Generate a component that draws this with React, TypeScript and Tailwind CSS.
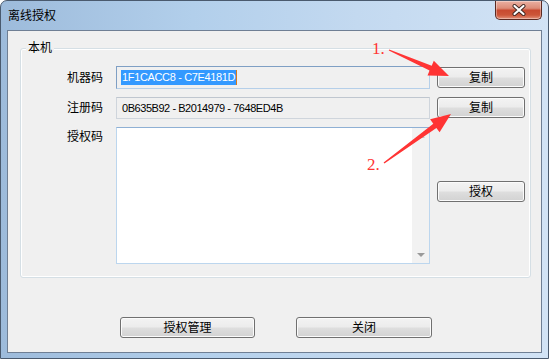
import React from 'react';

const btn =
  "flex items-center justify-center h-[21px] rounded-[3px] border border-[#707070] bg-[linear-gradient(#f3f3f3,#ececec_48%,#dedede_52%,#d2d2d2)] shadow-[inset_0_0_0_1px_#fbfbfb] text-[12px] leading-none text-black";

const WinButton: React.FC<{ label: string; className?: string }> = ({ label, className }) => (
  <button className={`${btn} ${className ?? ''}`}>{label}</button>
);

const Arrow: React.FC<{ tail: [number, number]; tip: [number, number] }> = ({ tail, tip }) => {
  const dx = tip[0] - tail[0];
  const dy = tip[1] - tail[1];
  const len = Math.hypot(dx, dy);
  const ux = dx / len;
  const uy = dy / len;
  const px = -uy;
  const py = ux;
  const bx = tip[0] - ux * 20;
  const by = tip[1] - uy * 20;
  const pts = [
    [tail[0] + px * 0.6, tail[1] + py * 0.6],
    [bx + px * 2.6, by + py * 2.6],
    [bx + px * 8, by + py * 8],
    tip,
    [bx - px * 8, by - py * 8],
    [bx - px * 2.6, by - py * 2.6],
    [tail[0] - px * 0.6, tail[1] - py * 0.6],
  ]
    .map((p) => `${p[0].toFixed(1)},${p[1].toFixed(1)}`)
    .join(' ');
  return <polygon points={pts} fill="#ff3434" />;
};

export default function App() {
  return (
    <div className="relative w-[549px] h-[359px] overflow-hidden rounded-t-[7px] border border-[#4a5a6e] bg-[linear-gradient(90deg,#9dbbdb,#b2cfeb_35%,#c3d9f0_65%,#d2e3f5)] font-['Liberation_Sans','Noto_Sans_CJK_SC',sans-serif] text-black">
      {/* title bar */}
      <div className="flex h-[29px] items-start justify-between">
        <div className="pl-[7px] pt-[7px] text-[12px] leading-[16px] text-black">离线授权</div>
        <button className="mr-[6px] flex h-[19px] w-[47px] items-center justify-center rounded-b-[5px] border border-t-0 border-[#5b2a22] bg-[linear-gradient(#eab0a2,#dc8c78_40%,#c84a30_52%,#cc5639_78%,#e3917a)] shadow-[inset_0_0_0_1px_rgba(255,255,255,0.35)]">
          <svg width="16" height="12" viewBox="0 0 16 12">
            <path d="M3.5 2 L12.5 10 M12.5 2 L3.5 10" stroke="#3d2520" strokeWidth="4" strokeLinecap="round" />
            <path d="M3.5 2 L12.5 10 M12.5 2 L3.5 10" stroke="#ffffff" strokeWidth="2.2" strokeLinecap="round" />
          </svg>
        </button>
      </div>

      {/* client area */}
      <div className="mx-[6px] h-[323px] border border-[#6f7f94] bg-[#f0f0f0]">
        {/* group box */}
        <div className="relative ml-[12px] mt-[17px] h-[230px] w-[511px] rounded-[3px] border border-[#d5dfe5] shadow-[inset_0_0_0_1px_#ffffff]">
          <span className="absolute -top-[9px] left-[5px] bg-[#f0f0f0] px-[2px] text-[12px] leading-[16px]">本机</span>

          <div className="grid grid-cols-[88px_314px_88px] gap-x-[7px] gap-y-[8px] pt-[17px]">
            {/* row 1 */}
            <div className="flex h-[23px] items-center pl-[46px] text-[12px]">机器码</div>
            <div className="flex h-[23px] items-center border border-[#7f9fc4] border-r-[#b5cfe9] border-b-[#b5cfe9] bg-[#f0f0f0] pl-[4px]">
              <span className="bg-[#3399ff] px-[1px] text-[11px] leading-[15px] tracking-[-0.35px] text-white">1F1CACC8 - C7E4181D</span>
              <span className="h-[15px] w-[1px] bg-[#d87a1a]" />
            </div>
            <WinButton label="复制" className="mt-[1px]" />

            {/* row 2 */}
            <div className="flex h-[22px] items-center pl-[46px] text-[12px]">注册码</div>
            <div className="flex h-[22px] items-center border border-[#cfd5dc] border-t-[#bfc6cf] bg-[#f0f0f0] pl-[5px] text-[11px] tracking-[-0.45px]">
              0B635B92 - B2014979 - 7648ED4B
            </div>
            <WinButton label="复制" />

            {/* row 3 */}
            <div className="pl-[46px] pt-[2px] text-[12px] leading-[16px]">授权码</div>
            <div className="flex h-[137px] border border-[#bcd6ee] border-t-[#8fb0d4] bg-white">
              <div className="flex-1" />
              <div className="flex w-[17px] flex-col items-center justify-between bg-[#f2f2f2] py-[5px]">
                <svg width="8" height="5" viewBox="0 0 8 5">
                  <path d="M0 5 L4 1 L8 5 Z" fill="#c4c4c4" />
                </svg>
                <svg width="8" height="5" viewBox="0 0 8 5">
                  <path d="M0 0 L8 0 L4 4 Z" fill="#9a9a9a" />
                </svg>
              </div>
            </div>
            <WinButton label="授权" className="mt-[54px]" />
          </div>
        </div>

        {/* bottom buttons */}
        <div className="mt-[39px] flex gap-[41px] pl-[112px]">
          <WinButton label="授权管理" className="w-[135px]" />
          <WinButton label="关闭" className="w-[136px]" />
        </div>
      </div>

      {/* annotations */}
      <svg className="pointer-events-none absolute left-0 top-0" width="549" height="359">
        <Arrow tail={[388, 49]} tip={[448, 75]} />
        <Arrow tail={[383, 162]} tip={[450, 113]} />
      </svg>
      <span className="absolute left-[371px] top-[38px] font-['Liberation_Serif',serif] text-[17px] leading-[20px] text-[#ff3434]">1.</span>
      <span className="absolute left-[366px] top-[154px] font-['Liberation_Serif',serif] text-[17px] leading-[20px] text-[#ff3434]">2.</span>
    </div>
  );
}
